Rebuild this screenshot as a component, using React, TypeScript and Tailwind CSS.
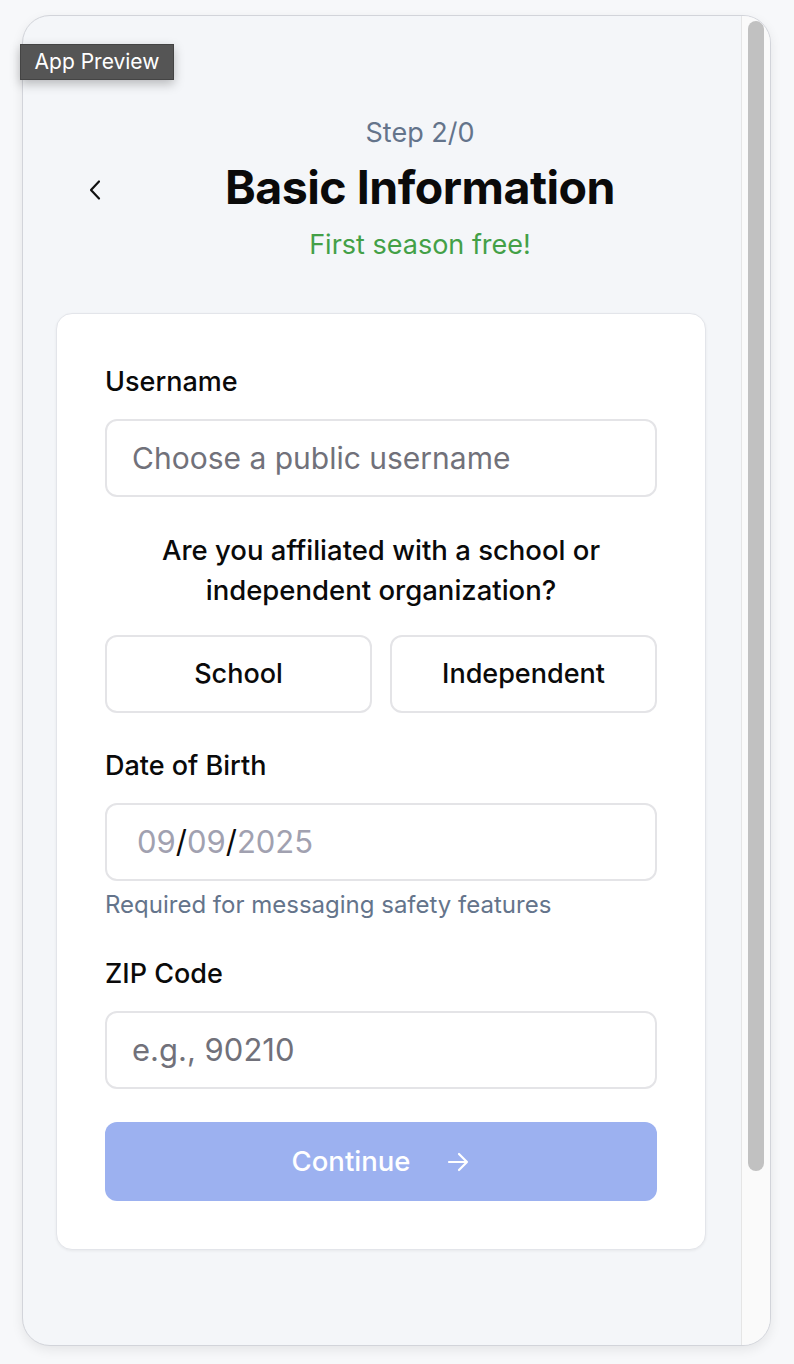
import React from "react";

function Chevron() {
  return (
    <svg width="14" height="22" viewBox="0 0 14 22" fill="none">
      <path d="M11 2.5 L3 11 L11 19.5" stroke="#111" strokeWidth="2.2" strokeLinecap="round" strokeLinejoin="round" />
    </svg>
  );
}

function Arrow() {
  return (
    <svg width="24" height="24" viewBox="0 0 24 24" fill="none">
      <path d="M3 12 H21 M13 4 L21 12 L13 20" stroke="#fff" strokeWidth="2.2" strokeLinecap="round" strokeLinejoin="round" />
    </svg>
  );
}

export default function App() {
  return (
    <div className="w-[794px] h-[1364px] bg-[#f7f8fa] relative overflow-hidden" style={{ fontFamily: "Inter, 'Noto Sans', sans-serif" }}>
      <div className="absolute left-[22px] top-[15px] w-[749px] h-[1331px] rounded-[28px] border-[1.5px] border-[#d2d4da] bg-[#f4f6f9] shadow-[0_4px_12px_rgba(0,0,0,0.08)] overflow-hidden flex">
        <div className="flex-1 flex flex-col items-start pl-[33px]">
          <div className="w-[650px] mt-[99px] flex items-center">
            <div className="w-[78px] shrink-0 flex justify-center mt-[2px]">
              <Chevron />
            </div>
            <div className="flex-1 flex flex-col items-center">
              <div className="text-[27px] leading-[36px] text-[#64748b]">Step 2/0</div>
              <div className="text-[46.5px] leading-[72px] font-bold text-[#0a0a0a] tracking-[-0.5px]">Basic Information</div>
              <div className="text-[27px] leading-[36px] text-[#43a047] mt-[4px]">First season free!</div>
            </div>
          </div>
          <div className="w-[650px] mt-[50px] bg-white rounded-[16px] border border-[#e3e5ea] shadow-[0_1px_3px_rgba(0,0,0,0.06)] px-[48px] pt-[50px] pb-[48px] flex flex-col">
            <div className="text-[27px] leading-[36px] font-medium text-[#0a0a0a]">Username</div>
            <div className="mt-[19px] h-[78px] rounded-[12px] border-2 border-[#e4e4e7] flex items-center px-[25px] text-[30px] text-[#71717a]">
              Choose a public username
            </div>
            <div className="mt-[33px] text-center text-[27.5px] leading-[40px] font-medium text-[#0a0a0a]">
              Are you affiliated with a school or
              <br />
              independent organization?
            </div>
            <div className="mt-[25px] grid grid-cols-2 gap-[18px]">
              <div className="h-[78px] rounded-[12px] border-2 border-[#e4e4e7] flex items-center justify-center text-[27px] font-medium text-[#0a0a0a]">School</div>
              <div className="h-[78px] rounded-[12px] border-2 border-[#e4e4e7] flex items-center justify-center text-[27px] font-medium text-[#0a0a0a]">Independent</div>
            </div>
            <div className="mt-[35px] text-[27px] leading-[36px] font-medium text-[#0a0a0a]">Date of Birth</div>
            <div className="mt-[19px] h-[78px] rounded-[12px] border-2 border-[#e4e4e7] flex items-center pl-[30px] text-[31px] text-[#a1a1b0]">
              <span>09</span><span className="text-[#0a0a0a]">/</span><span>09</span><span className="text-[#0a0a0a]">/</span><span>2025</span>
            </div>
            <div className="mt-[10px] text-[24px] leading-[28px] text-[#64748b]">Required for messaging safety features</div>
            <div className="mt-[37px] text-[27px] leading-[36px] font-medium text-[#0a0a0a]">ZIP Code</div>
            <div className="mt-[19px] h-[78px] rounded-[12px] border-2 border-[#e4e4e7] flex items-center px-[25px] text-[31px] text-[#71717a]">
              e.g., 90210
            </div>
            <div className="mt-[33px] h-[79px] rounded-[12px] bg-[#9cb1f0] flex items-center justify-center gap-[36px] text-white text-[27.5px] font-medium">
              <span>Continue</span>
              <Arrow />
            </div>
          </div>
        </div>
        <div className="w-[29px] shrink-0 bg-[#fafafa] border-l border-[#e5e5e5] pt-[5px] flex justify-center">
          <div className="w-[16px] h-[1150px] rounded-full bg-[#c1c1c1]" />
        </div>
      </div>
      <div className="absolute left-[20px] top-[44px] w-[154px] h-[36px] bg-[#555555] border border-[#444] shadow-[0_4px_10px_rgba(0,0,0,0.25)] flex items-center justify-center text-white text-[21px]">
        App Preview
      </div>
    </div>
  );
}
